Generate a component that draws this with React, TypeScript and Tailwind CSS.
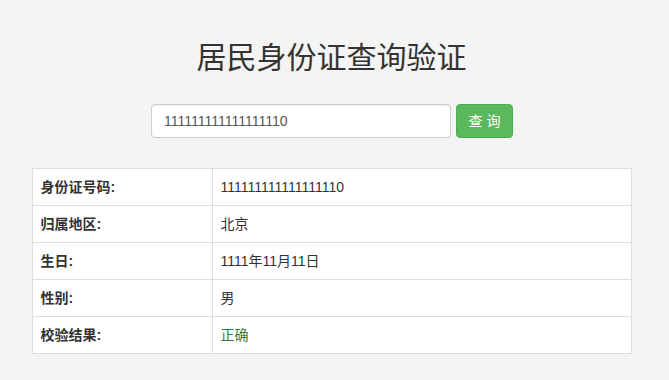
import { useState } from "react";

const FONT = { fontFamily: '"Helvetica Neue", "Liberation Sans", Arial, "Noto Sans CJK SC", sans-serif' };

const ROWS: { label: string; value: string; ok?: boolean }[] = [
  { label: "身份证号码:", value: "111111111111111110" },
  { label: "归属地区:", value: "北京" },
  { label: "生日:", value: "1111年11月11日" },
  { label: "性别:", value: "男" },
  { label: "校验结果:", value: "正确", ok: true },
];

export default function App() {
  const [idNo, setIdNo] = useState("111111111111111110");

  return (
    <div className="min-h-[380px] w-full bg-[#f4f4f4] text-[#333] text-[14px]" style={FONT}>
      <div className="mx-auto w-[600px] pt-[40px] -translate-x-[3px]">
        <h1 className="text-center text-[30px] leading-[36px] font-normal text-[#333]">居民身份证查询验证</h1>

        {/* 查询表单 */}
        <div className="mt-[28px] flex justify-center gap-[5px] pl-[1px]">
          <input
            value={idNo}
            onChange={(e) => setIdNo(e.target.value)}
            className="h-[34px] w-[300px] rounded-[4px] border border-[#ccc] bg-white px-[12px] text-[14px] text-[#555] shadow-[inset_0_1px_1px_rgba(0,0,0,0.075)] outline-none"
          />
          <button className="h-[34px] w-[57px] rounded-[4px] border border-[#4cae4c] bg-[#5cb85c] text-[14px] text-white">
            查 询
          </button>
        </div>

        {/* 结果 */}
        <table className="mt-[30px] w-full border-collapse border border-[#ddd] bg-white">
          <tbody>
            {ROWS.map((r) => (
              <tr key={r.label} className="h-[37px]">
                <td className="w-[180px] border border-[#ddd] px-[8px] font-bold leading-[20px]">{r.label}</td>
                <td className={`border border-[#ddd] px-[8px] leading-[20px] ${r.ok ? "text-[#3c763d]" : ""}`}>
                  {r.value}
                </td>
              </tr>
            ))}
          </tbody>
        </table>
      </div>
    </div>
  );
}
